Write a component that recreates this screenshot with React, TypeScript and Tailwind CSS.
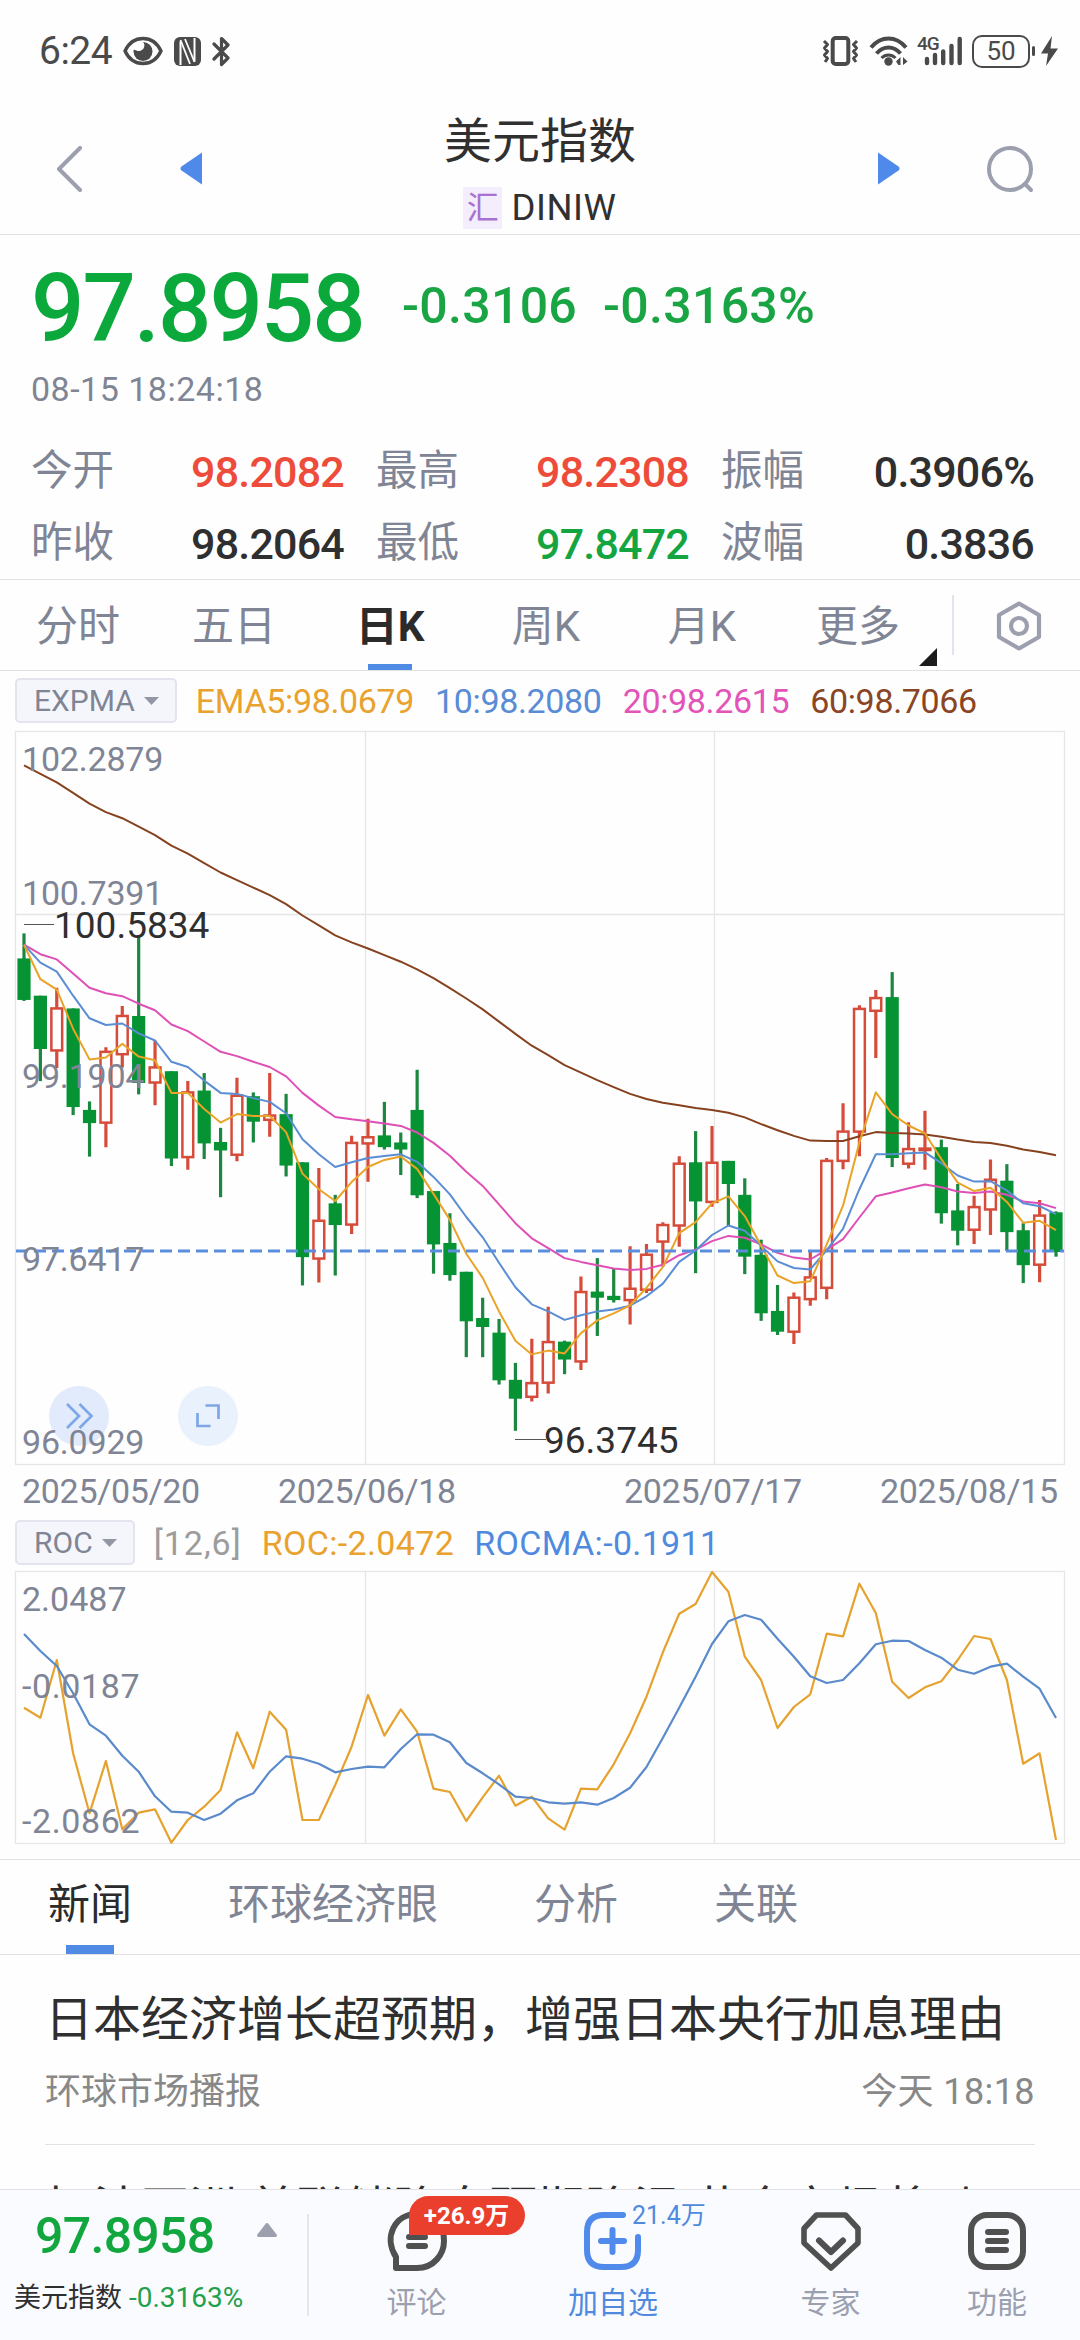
import type { ReactNode } from 'react';

type Candle = [high: number, top: number, bottom: number, low: number, up: 0 | 1];

// Plot levels, 0..1553 from the top edge of the main panel (offset by 3)
const candles: Candle[] = [
  [431, 484, 572, 574, 0],
  [563, 563, 676, 744, 0],
  [546, 590, 679, 716, 1],
  [590, 590, 799, 816, 0],
  [787, 805, 833, 904, 0],
  [672, 682, 832, 884, 1],
  [585, 606, 687, 715, 1],
  [435, 606, 748, 772, 0],
  [658, 715, 747, 795, 1],
  [723, 723, 908, 924, 0],
  [744, 768, 905, 932, 1],
  [727, 764, 876, 909, 0],
  [843, 873, 891, 990, 0],
  [737, 775, 900, 914, 1],
  [768, 776, 830, 874, 0],
  [727, 817, 826, 862, 1],
  [771, 814, 923, 946, 0],
  [916, 916, 1117, 1177, 0],
  [928, 1040, 1120, 1171, 1],
  [985, 1003, 1049, 1156, 0],
  [860, 875, 1048, 1068, 1],
  [824, 863, 876, 957, 1],
  [788, 859, 884, 889, 0],
  [853, 874, 889, 943, 0],
  [720, 805, 986, 992, 0],
  [977, 977, 1090, 1152, 0],
  [1024, 1087, 1155, 1167, 0],
  [1148, 1148, 1253, 1329, 0],
  [1203, 1246, 1265, 1329, 0],
  [1248, 1277, 1378, 1387, 0],
  [1341, 1377, 1417, 1485, 0],
  [1290, 1384, 1413, 1423, 1],
  [1222, 1297, 1383, 1406, 1],
  [1294, 1296, 1334, 1365, 0],
  [1158, 1191, 1338, 1356, 1],
  [1119, 1190, 1203, 1284, 0],
  [1141, 1199, 1208, 1213, 0],
  [1094, 1184, 1208, 1260, 1],
  [1089, 1112, 1186, 1193, 1],
  [1043, 1049, 1084, 1137, 1],
  [903, 919, 1050, 1095, 1],
  [850, 916, 999, 1151, 0],
  [839, 917, 1000, 1010, 1],
  [913, 913, 962, 1050, 0],
  [950, 985, 1116, 1153, 0],
  [1080, 1112, 1236, 1252, 0],
  [1176, 1231, 1275, 1282, 0],
  [1192, 1203, 1275, 1301, 1],
  [1105, 1160, 1206, 1220, 1],
  [907, 913, 1182, 1206, 1],
  [791, 851, 913, 931, 1],
  [583, 591, 851, 903, 1],
  [551, 568, 595, 695, 1],
  [513, 566, 907, 926, 0],
  [831, 888, 919, 929, 1],
  [807, 887, 890, 932, 1],
  [868, 884, 1024, 1046, 0],
  [962, 1018, 1061, 1092, 0],
  [987, 1011, 1059, 1089, 1],
  [910, 953, 1016, 1070, 1],
  [920, 955, 1064, 1104, 0],
  [1045, 1060, 1134, 1172, 0],
  [996, 1029, 1133, 1170, 1],
  [1020, 1022, 1106, 1116, 0],
];

const ema60 = [
  75, 93, 111, 133, 156, 174, 187, 205, 223, 245, 262, 282, 302, 318, 334, 350, 369, 393, 414, 435, 450, 463,
  477, 491, 507, 526, 547, 569, 592, 618, 644, 669, 689, 710, 726, 742, 757, 771, 782, 790, 795, 801, 805, 811,
  821, 835, 848, 860, 870, 871, 871, 861, 852, 854, 855, 857, 862, 868, 873, 875, 881, 889, 894, 901,
];
const ema20 = [
  455, 475, 486, 516, 546, 558, 564, 580, 594, 624, 638, 660, 682, 691, 703, 714, 734, 769, 796, 820, 825, 829,
  834, 839, 853, 875, 902, 936, 966, 1005, 1045, 1077, 1098, 1119, 1127, 1134, 1141, 1144, 1142, 1133, 1113,
  1101, 1083, 1072, 1076, 1090, 1108, 1118, 1122, 1101, 1079, 1033, 988, 980, 971, 963, 969, 978, 981, 978, 985,
  999, 1003, 1013,
];
const ema10 = [
  455, 493, 512, 563, 611, 625, 622, 643, 658, 703, 714, 743, 769, 771, 780, 788, 812, 867, 899, 926, 916, 907,
  903, 899, 915, 947, 984, 1032, 1075, 1129, 1181, 1217, 1232, 1250, 1240, 1232, 1228, 1220, 1200, 1173, 1127,
  1103, 1070, 1050, 1061, 1093, 1126, 1140, 1143, 1102, 1057, 973, 899, 899, 897, 895, 918, 944, 957, 956, 976,
  1003, 1009, 1026,
];
const ema5 = [
  455, 528, 550, 633, 698, 694, 665, 692, 700, 769, 769, 803, 832, 814, 818, 818, 852, 940, 973, 998, 958, 926,
  911, 904, 930, 983, 1038, 1110, 1161, 1232, 1294, 1323, 1315, 1321, 1278, 1251, 1236, 1219, 1182, 1138, 1066,
  1043, 1003, 988, 1030, 1093, 1156, 1172, 1168, 1090, 1008, 874, 768, 814, 838, 855, 909, 959, 977, 970, 1000,
  1044, 1040, 1060,
];

// Levels of the lower panel, three per pixel
const roc = [
  743, 773, 600, 880, 1060, 903, 1108, 1058, 1048, 1148, 1080, 1040, 990, 817, 925, 755, 809, 1080, 1080, 975,
  860, 705, 827, 748, 815, 986, 996, 1083, 1012, 947, 1037, 1010, 1075, 1109, 986, 988, 913, 820, 710, 577, 461,
  432, 336, 395, 590, 660, 804, 741, 703, 521, 529, 371, 459, 665, 714, 682, 664, 600, 528, 537, 660, 911, 880,
  1140,
];
const rocMa = [
  522, 573, 618, 700, 793, 827, 887, 935, 1009, 1055, 1058, 1080, 1061, 1021, 1000, 935, 889, 896, 911, 937, 927,
  920, 922, 867, 823, 824, 847, 909, 940, 973, 1010, 1014, 1027, 1031, 1027, 1034, 1014, 983, 921, 833, 743, 650,
  552, 484, 465, 479, 536, 590, 649, 669, 660, 610, 553, 542, 543, 570, 593, 629, 641, 620, 611, 650, 686, 774,
];

const xAt = (i: number) => 24 + i * 16.381;
const priceY = (v: number) => v / 2.119;
const rocY = (v: number) => (v - 330) / 3;

const toPoints = (values: number[], scale: (v: number) => number) =>
  values.map((v, i) => `${xAt(i).toFixed(1)},${scale(v).toFixed(1)}`).join(' ');

const font = "font-['Roboto','Noto_Sans_CJK_SC',sans-serif]";

const stats = [
  { label: '今开', value: '98.2082', color: 'text-[#ee4c3a]' },
  { label: '最高', value: '98.2308', color: 'text-[#ee4c3a]' },
  { label: '振幅', value: '0.3906%', color: 'text-[#2f2f2f]' },
  { label: '昨收', value: '98.2064', color: 'text-[#2f2f2f]' },
  { label: '最低', value: '97.8472', color: 'text-[#14a540]' },
  { label: '波幅', value: '0.3836', color: 'text-[#2f2f2f]' },
];

const periods = ['分时', '五日', '日K', '周K', '月K', '更多'];

function StatusBar() {
  return (
    <div className="flex h-[102px] shrink-0 items-center pl-[39px] pr-[22px] text-[#4a4a4a]">
      <span className="w-[84px] text-[39px] leading-none tracking-[-0.5px]">6:24</span>
      <svg className="w-10 h-[30px]" viewBox="0 0 40 30" fill="none">
        <path d="M2 15C6 6.500 12 2.500 20 2.500S34 6.500 38 15C34 23.500 28 27.500 20 27.500S6 23.500 2 15Z" stroke="currentColor" strokeWidth="3.400" />
        <circle cx="20" cy="15.500" r="9.500" fill="currentColor" />
        <path d="M19 5a5.500 5.500 0 0 1-5.500 9.500L9 13c1-5 5-8 10-8Z" fill="#fefefe" />
      </svg>
      <svg className="ml-[11px] w-[27px] h-[29px]" viewBox="0 0 27 29" fill="none">
        <rect width="27" height="29" rx="6" fill="currentColor" />
        <path d="M6.500 28V4.500M20.500 1v23.500" stroke="#fefefe" strokeWidth="2" />
        <path d="M6.500 3 16 27M11 2l9.500 23" stroke="#fefefe" strokeWidth="1.800" />
      </svg>
      <svg className="ml-[11px] w-[19px] h-[31px]" viewBox="0 0 19 31" fill="none" stroke="currentColor" strokeWidth="3.200" strokeLinejoin="round" strokeLinecap="round">
        <path d="M2 8 16 22 9.500 28.500V2.500L16 9 2 23" />
      </svg>
      <div className="flex-1" />
      <svg className="w-[37px] h-[30px]" viewBox="0 0 37 30" fill="none" stroke="currentColor">
        <rect x="10.700" y="2" width="15.600" height="26" rx="3" strokeWidth="4" />
        <path d="m2 5 3.500 3.500L2.500 12 5.500 15.500 2.500 19 5.500 22.500 3 26M35 5l-3.500 3.500 3 3.500-3 3.500 3 3.500-3 3.500L34 26" strokeWidth="3" strokeLinejoin="round" />
      </svg>
      <svg className="ml-[10px] w-[40px] h-[32px]" viewBox="0 0 40 32" fill="none" stroke="currentColor" strokeWidth="4">
        <path d="M2 12.500C12 .5 27 .5 37 12.500" />
        <path d="M7.500 18.500c7-8 17-8 24 0" />
        <path d="M12.500 23c4-4 10-4 14 0" strokeWidth="3" />
        <circle cx="19.500" cy="26.500" r="4.200" fill="currentColor" stroke="none" />
        <path d="m27 26.500 4.500-4.500v8h-2ZM38.500 26.500 34 22v8Z" fill="currentColor" stroke="none" />
      </svg>
      <div className="relative ml-2 h-[32px] w-[46px]">
        <span className="absolute left-0 -top-[1px] text-[19px] leading-none font-medium tracking-[-1px]">4G</span>
        <svg className="size-full" viewBox="0 0 46 32" stroke="currentColor" strokeWidth="4.400" strokeLinecap="round">
          <path d="M10 24v4M18 20v8M26.200 16.500V28M34.500 11V28M42.700 4V28" />
        </svg>
      </div>
      <div className="ml-[9px] flex h-[33px] w-[58px] items-center justify-center rounded-[10px] border-[2.5px] border-[#4a4a4a] text-[26px] leading-none">50</div>
      <div className="ml-[2px] h-[10px] w-[3px] rounded bg-[#4a4a4a]" />
      <svg className="ml-[6px] w-[17px] h-[30px]" viewBox="0 0 17 30" fill="currentColor">
        <path d="M11 0 0 17.500h7L5 30 17 12.500H9.500Z" />
      </svg>
    </div>
  );
}

function Header() {
  return (
    <header className="flex h-[133px] shrink-0 items-center border-b border-[#e2e2e4] pl-[56px] pr-[46px] pt-px">
      <svg className="h-[46px] w-[28px]" viewBox="0 0 28 46" fill="none" stroke="#9b9fae" strokeWidth="4" strokeLinecap="round" strokeLinejoin="round">
        <path d="M24 2 3 23l21 21" />
      </svg>
      <svg className="ml-[96px] h-[33px] w-[22px]" viewBox="0 0 22 33" fill="#4f8aeb">
        <path d="M22 .5v32L1.500 18.500q-2-2 0-4Z" />
      </svg>
      <div className="flex flex-1 flex-col items-center">
        <h1 className="mt-[3px] text-[48px] leading-[62px] text-[#303030]">美元指数</h1>
        <div className="mt-[14px] flex items-center">
          <span className="flex h-[42px] w-[39px] items-center justify-center bg-[#f4edfb] text-[32px] leading-none text-[#a772d2]">汇</span>
          <span className="ml-[9px] text-[36.500px] leading-[42px] tracking-[0.6px] text-[#303030]">DINIW</span>
        </div>
      </div>
      <svg className="mr-[86px] h-[33px] w-[22px]" viewBox="0 0 22 33" fill="#4f8aeb">
        <path d="M0 .5v32l20.500-14q2-2 0-4Z" />
      </svg>
      <svg className="h-[48px] w-[48px]" viewBox="0 0 48 48" fill="none" stroke="#9b9fae" strokeWidth="4" strokeLinecap="round">
        <circle cx="24" cy="24" r="21" />
        <path d="m39 39 6 6" />
      </svg>
    </header>
  );
}

function Quote() {
  return (
    <section className="flex h-[345px] shrink-0 flex-col border-b border-[#e2e2e4] pl-[31px] pr-[46px]">
      <div className="mt-[27px] flex h-[96px] items-center">
        <span className="w-[371px] text-[94px] leading-none font-medium tracking-[-2px] text-[#0ba93c]">97.8958</span>
        <span className="w-[201px] text-[50px] leading-none font-medium tracking-[0.3px] text-[#1aa544] -mt-[7px]">-0.3106</span>
        <span className="text-[50px] leading-none font-medium tracking-[0.3px] text-[#1aa544] -mt-[7px]">-0.3163%</span>
      </div>
      <div className="mt-[13px] h-10 text-[34px] leading-10 tracking-[0.5px] text-[#808595]">08-15 18:24:18</div>
      <div className="mt-[27px] grid grid-cols-3 gap-x-8">
        {stats.map((s) => (
          <div key={s.label} className="flex h-[72px] items-center justify-between">
            <span className="-mt-[3px] text-[41.500px] leading-none text-[#808595]">{s.label}</span>
            <span className={`text-[43px] leading-none font-medium tracking-[-0.8px] ${s.color}`}>{s.value}</span>
          </div>
        ))}
      </div>
    </section>
  );
}

function PeriodTabs() {
  return (
    <nav className="flex h-[91px] shrink-0 items-stretch border-b border-[#e2e2e4] text-[42px] leading-none text-[#808595]">
      {periods.map((p) => {
        const active = p === '日K';
        return (
          <div
            key={p}
            className={`relative flex w-[156px] items-center justify-center ${active ? 'font-bold text-[#2b2b2b]' : ''}`}
          >
            <span className="mt-[3px]">{p}</span>
            {active && <div className="absolute bottom-0 h-[6px] w-[44px] bg-[#4f8ae5]" />}
            {p === '更多' && (
              <svg className="absolute -right-px bottom-[4px] h-[18px] w-[18px]" viewBox="0 0 18 18" fill="#1c1c1c">
                <path d="M18 0v18H0Z" />
              </svg>
            )}
          </div>
        );
      })}
      <div className="ml-4 h-[60px] w-[2px] self-center bg-[#e2e3ec]" />
      <div className="flex flex-1 items-center justify-center pl-1">
        <svg className="mt-px h-[50px] w-[46px]" viewBox="0 0 46 50" fill="none" stroke="#9b9fae" strokeWidth="4.200" strokeLinejoin="round">
          <path d="M23 2.500 43 14v22L23 47.500 3 36V14Z" />
          <circle cx="23" cy="25" r="8" />
        </svg>
      </div>
    </nav>
  );
}

function Chip({ children }: { children: ReactNode }) {
  return (
    <div className="flex h-[45px] items-center rounded-[5px] border-2 border-[#e3e4ee] bg-[#f5f6fb] pl-[17px] pr-4 text-[30px] leading-none tracking-normal text-[#808595]">
      {children}
      <svg className="ml-[9px] h-2 w-[15px]" viewBox="0 0 15 8" fill="#9296a5">
        <path d="M0 0h15L7.500 8Z" />
      </svg>
    </div>
  );
}

function PriceChart() {
  return (
    <svg className="block h-[736px] w-[1080px] shrink-0" viewBox="0 0 1080 736">
      <g stroke="#e6e6e8" strokeWidth="1.300" fill="none">
        <rect x="15.500" y="1.500" width="1049" height="733" />
        <path d="M15.500 184.500H1064.500M365.500 1.500V734M714.500 1.500V734" />
      </g>
      {candles.map(([high, top, bottom, low, up], i) => {
        const x = xAt(i);
        const y = priceY(top);
        const h = priceY(bottom) - y;
        return up ? (
          <g key={i} stroke="#d64c3b" fill="none">
            <path d={`M${x} ${priceY(high)}V${y}M${x} ${y + h}V${priceY(low)}`} strokeWidth="3.200" />
            <rect x={x - 5.400} y={y} width="10.800" height={h} strokeWidth="2.500" />
          </g>
        ) : (
          <g key={i} fill="#069333">
            <rect x={x - 1.600} y={priceY(high)} width="3.200" height={priceY(low - high)} fill="#1c8741" />
            <rect x={x - 6.600} y={y} width="13.200" height={h} />
          </g>
        );
      })}
      <g fill="none" strokeWidth="2" strokeLinejoin="round">
        <polyline points={toPoints(ema60, priceY)} stroke="#86421f" />
        <polyline points={toPoints(ema20, priceY)} stroke="#df50b6" />
        <polyline points={toPoints(ema10, priceY)} stroke="#5a8dd3" />
        <polyline points={toPoints(ema5, priceY)} stroke="#e9a326" />
      </g>
      <path d="M16 521H1064" stroke="#5a8ddb" strokeWidth="2.800" strokeDasharray="12 6" />
      <circle cx="79" cy="686" r="30" fill="#dce8fb" fillOpacity=".85" />
      <circle cx="208" cy="686" r="30" fill="#e8f0fc" fillOpacity=".95" />
      <g fill="none" stroke="#7da7e6" strokeWidth="2.700">
        <path d="m67 674 12 12-12 12M79.500 674l12 12-12 12" />
        <path d="M205.500 675.500H218.500V689M197.500 683V696H210.500" />
      </g>
      <g fill="#808595" fontSize="34">
        <text x="22" y="41" letterSpacing="-.2">102.2879</text>
        <text x="22" y="175" letterSpacing="-.2">100.7391</text>
        <text x="22" y="358" letterSpacing="-.2">99.1904</text>
        <text x="22" y="541" letterSpacing="-.2">97.6417</text>
        <text x="22" y="724" letterSpacing="-.2">96.0929</text>
      </g>
      <path d="M24 194.500H54M515 709.500H546" stroke="#555" strokeWidth="1.200" />
      <g fill="#2f2f2f" fontSize="37">
        <text x="54" y="208">100.5834</text>
        <text x="544" y="723">96.3745</text>
      </g>
    </svg>
  );
}

function RocChart() {
  return (
    <svg className="block h-[276px] w-[1080px] shrink-0" viewBox="0 0 1080 276">
      <g stroke="#e6e6e8" strokeWidth="1.300" fill="none">
        <rect x="15.500" y="1.500" width="1049" height="272" />
        <path d="M365.500 1.500V273.500M714.500 1.500V273.500" />
      </g>
      <g fill="none" strokeWidth="2.200" strokeLinejoin="round">
        <polyline points={toPoints(roc, rocY)} stroke="#e5a22e" />
        <polyline points={toPoints(rocMa, rocY)} stroke="#5a8acb" />
      </g>
      <g fill="#808595" fontSize="34">
        <text x="22" y="41">2.0487</text>
        <text x="22" y="128" letterSpacing=".6">-0.0187</text>
        <text x="22" y="263" letterSpacing=".6">-2.0862</text>
      </g>
    </svg>
  );
}

function News() {
  return (
    <>
      <nav className="flex h-[96px] shrink-0 items-stretch gap-24 border-y border-[#e2e2e4] pl-12 text-[42px] leading-none text-[#808595]">
        {['新闻', '环球经济眼', '分析', '关联'].map((name, i) => (
          <div key={name} className={`relative flex items-center justify-center ${i === 0 ? 'text-[#2b2b2b]' : ''}`}>
            <span className="-mt-[4px]">{name}</span>
            {i === 0 && <div className="absolute bottom-0 h-[9px] w-12 bg-[#4f8ae5]" />}
          </div>
        ))}
      </nav>
      <div className="flex flex-1 flex-col overflow-hidden px-[45px]">
        <article className="h-[190px] shrink-0 border-b border-[#e2e2e4]">
          <h2 className="mt-[35px] text-[48px] leading-[60px] whitespace-nowrap text-[#2f2f2f]">日本经济增长超预期，增强日本央行加息理由</h2>
          <div className="mt-[18px] flex justify-between text-[36px] leading-[48px] text-[#888]">
            <span>环球市场播报</span>
            <span className="tracking-[0.4px]">今天 18:18</span>
          </div>
        </article>
        <h2 className="mt-[35px] text-[48px] leading-[60px] whitespace-nowrap text-[#2f2f2f]">担法亚洲 美联储降息预期降温 黄金市场将动</h2>
      </div>
    </>
  );
}

function BottomBar() {
  return (
    <footer className="flex h-[151px] shrink-0 border-t border-[#e0e2e7] bg-[#fafbff]">
      <div className="flex w-[307px] flex-col">
        <div className="mt-[20px] flex h-[52px] items-center pl-[35px]">
          <span className="w-[222px] text-[50px] leading-none font-medium tracking-[-0.7px] text-[#12a63e]">97.8958</span>
          <svg className="-mt-3 h-[14px] w-[20px]" viewBox="0 0 20 14" fill="#9b9fae">
            <path d="M10 0q1 0 1.500 1L20 12q0 2-1.500 2h-17Q0 14 0 12L8.500 1Q9 0 10 0Z" />
          </svg>
        </div>
        <div className="mt-[18px] flex items-center pl-[14px] text-[27px] leading-[36px] text-[#2f2f2f]">
          美元指数
          <span className="ml-[7px] text-[28px] text-[#23a04b]">-0.3163%</span>
        </div>
      </div>
      <div className="mt-[24px] h-[102px] w-[2px] bg-[#e4e6ec]" />
      <div className="flex w-[215px] flex-col items-center">
        <div className="relative mt-[21px] h-[60px] w-[60px]">
          <svg className="size-full" viewBox="0 0 60 60" fill="none" stroke="#505050" strokeWidth="6" strokeLinecap="round" strokeLinejoin="round">
            <path d="M9 57V46C-4 26 8 3 30 3s27 14 27 27-10 27-27 27Z" />
            <path d="M22 26h16M22 35h16" />
          </svg>
          <div className="absolute -top-[15px] left-[22px] flex h-[39px] w-[116px] items-center justify-center rounded-full rounded-bl-none bg-[#ea3f2d] text-[24px] leading-none font-bold whitespace-nowrap text-white">
            +26.9万
          </div>
        </div>
        <span className="mt-[13px] text-[30px] leading-[38px] text-[#9b9fae]">评论</span>
      </div>
      <div className="flex w-[178px] flex-col items-center">
        <div className="relative mt-[21px] h-[60px] w-[60px]">
          <svg className="size-full" viewBox="0 0 60 60" fill="none" stroke="#508aea" strokeWidth="6" strokeLinecap="round">
            <path d="M40 4H21Q4 4 4 21v18Q4 56 21 56h17Q55 56 55 39V26" />
            <path d="M18 30h23M29.500 19v22" />
          </svg>
          <span className="absolute -top-[8px] left-[49px] text-[25px] leading-none whitespace-nowrap text-[#508ade]">21.4万</span>
        </div>
        <span className="mt-[13px] text-[30px] leading-[38px] text-[#508ade]">加自选</span>
      </div>
      <div className="flex w-[257px] flex-col items-center">
        <svg className="mt-[21px] h-[60px] w-[60px]" viewBox="0 0 60 60" fill="none" stroke="#505050" strokeWidth="5.600" strokeLinecap="round" strokeLinejoin="round">
          <path d="M15.500 4h29L57 17.500V32L30 57 3 32V17.500Z" />
          <path d="M18 29.500 30 41l12-11.500" strokeWidth="6" />
        </svg>
        <span className="mt-[13px] text-[30px] leading-[38px] text-[#9b9fae]">专家</span>
      </div>
      <div className="flex w-[76px] flex-col items-center">
        <svg className="mt-[21px] h-[60px] w-[60px]" viewBox="0 0 60 60" fill="none" stroke="#505050" strokeWidth="6" strokeLinecap="round">
          <rect x="4" y="4" width="52" height="52" rx="16" />
          <path d="M21 21h18M21 30h18M21 39h18" />
        </svg>
        <span className="mt-[13px] text-[30px] leading-[38px] text-[#9b9fae]">功能</span>
      </div>
    </footer>
  );
}

export default function App() {
  return (
    <div className={`flex h-[2340px] w-[1080px] flex-col overflow-hidden bg-[#fefefe] ${font}`}>
      <StatusBar />
      <Header />
      <Quote />
      <PeriodTabs />
      <div className="flex h-[59px] shrink-0 items-center pl-[15px] text-[34px] leading-none tracking-[-0.35px]">
        <Chip>EXPMA</Chip>
        <div className="ml-[19px] flex gap-[21px] whitespace-nowrap">
          <span className="text-[#e9a22d]">EMA5:98.0679</span>
          <span className="text-[#5a8cd6]">10:98.2080</span>
          <span className="text-[#e254b8]">20:98.2615</span>
          <span className="text-[#8a4524]">60:98.7066</span>
        </div>
      </div>
      <PriceChart />
      <div className="flex h-[49px] shrink-0 items-center pl-[22px] text-[34px] leading-none tracking-[-0.3px] text-[#808595]">
        <span className="w-[256px]">2025/05/20</span>
        <span className="w-[346px]">2025/06/18</span>
        <span className="w-[256px]">2025/07/17</span>
        <span>2025/08/15</span>
      </div>
      <div className="flex h-[55px] shrink-0 items-center pl-[15px] text-[34px] leading-none tracking-[0.35px]">
        <Chip>ROC</Chip>
        <div className="ml-[19px] flex gap-5 whitespace-nowrap">
          <span className="tracking-[1px] text-[#9c9c9c]">[12,6]</span>
          <span className="text-[#e9a22d]">ROC:-2.0472</span>
          <span className="text-[#508ade]">ROCMA:-0.1911</span>
        </div>
      </div>
      <RocChart />
      <div className="h-[13px] shrink-0" />
      <News />
      <BottomBar />
    </div>
  );
}
